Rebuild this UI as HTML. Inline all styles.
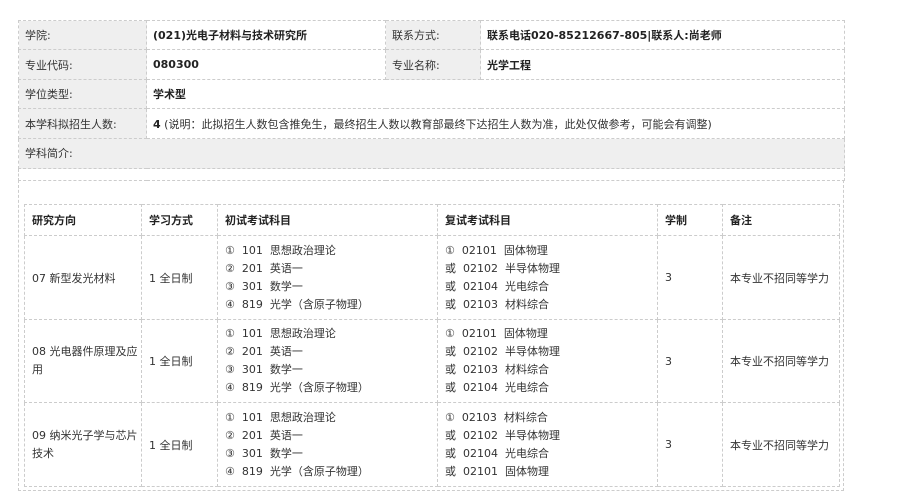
<!DOCTYPE html>
<html><head><meta charset="utf-8"><style>
body{margin:0;background:#fff;font-family:"DejaVu Sans","Noto Sans CJK SC",sans-serif;font-size:11px;color:#333;}
table{border-collapse:collapse;table-layout:fixed;position:absolute;}
td{border:1px dashed #ccc;padding:0 0 0 6px;vertical-align:middle;}
#o{left:18px;top:20px;width:826px;}
#o td.l{background:#efefef;}
#o td b{color:#222;}
#i{left:24px;top:204px;width:815px;}
#i td{padding-left:7px;}
#i th{border:1px dashed #ccc;text-align:left;padding-left:7px;font-weight:bold;color:#222;height:28px;}
.ln{line-height:18px;}
#box{position:absolute;left:18px;top:180px;width:824px;height:310px;border:1px dashed #ccc;border-top:none;}
</style></head><body>
<div id="box"></div>
<table id="o">
<colgroup><col style="width:128px"><col style="width:239px"><col style="width:95px"><col style="width:364px"></colgroup>
<tr style="height:29px"><td class="l">学院:</td><td><b>(021)光电子材料与技术研究所</b></td><td class="l">联系方式:</td><td><b>联系电话020-85212667-805|联系人:尚老师</b></td></tr>
<tr style="height:30px"><td class="l">专业代码:</td><td><b>080300</b></td><td class="l">专业名称:</td><td><b>光学工程</b></td></tr>
<tr style="height:29px"><td class="l">学位类型:</td><td colspan="3"><b>学术型</b></td></tr>
<tr style="height:30px"><td class="l">本学科拟招生人数:</td><td colspan="3"><b>4</b> (说明：此拟招生人数包含推免生，最终招生人数以教育部最终下达招生人数为准，此处仅做参考，可能会有调整)</td></tr>
<tr style="height:30px"><td class="l" colspan="4" style="padding-bottom:2px">学科简介:</td></tr>
<tr style="height:12px"><td colspan="4"></td></tr>
</table>
<table id="i">
<colgroup><col style="width:117px"><col style="width:76px"><col style="width:220px"><col style="width:220px"><col style="width:65px"><col style="width:117px"></colgroup>
<tr><th>研究方向</th><th>学习方式</th><th>初试考试科目</th><th>复试考试科目</th><th>学制</th><th>备注</th></tr>
<tr style="height:84px"><td>07 新型发光材料</td><td>1 全日制</td><td class="ln">①&nbsp; 101&nbsp; 思想政治理论<br>②&nbsp; 201&nbsp; 英语一<br>③&nbsp; 301&nbsp; 数学一<br>④&nbsp; 819&nbsp; 光学（含原子物理）</td><td class="ln">①&nbsp; 02101&nbsp; 固体物理<br>或&nbsp; 02102&nbsp; 半导体物理<br>或&nbsp; 02104&nbsp; 光电综合<br>或&nbsp; 02103&nbsp; 材料综合</td><td>3</td><td>本专业不招同等学力</td></tr>
<tr style="height:83px"><td class="ln">08 光电器件原理及应用</td><td>1 全日制</td><td class="ln">①&nbsp; 101&nbsp; 思想政治理论<br>②&nbsp; 201&nbsp; 英语一<br>③&nbsp; 301&nbsp; 数学一<br>④&nbsp; 819&nbsp; 光学（含原子物理）</td><td class="ln">①&nbsp; 02101&nbsp; 固体物理<br>或&nbsp; 02102&nbsp; 半导体物理<br>或&nbsp; 02103&nbsp; 材料综合<br>或&nbsp; 02104&nbsp; 光电综合</td><td>3</td><td>本专业不招同等学力</td></tr>
<tr style="height:84px"><td class="ln">09 纳米光子学与芯片技术</td><td>1 全日制</td><td class="ln">①&nbsp; 101&nbsp; 思想政治理论<br>②&nbsp; 201&nbsp; 英语一<br>③&nbsp; 301&nbsp; 数学一<br>④&nbsp; 819&nbsp; 光学（含原子物理）</td><td class="ln">①&nbsp; 02103&nbsp; 材料综合<br>或&nbsp; 02102&nbsp; 半导体物理<br>或&nbsp; 02104&nbsp; 光电综合<br>或&nbsp; 02101&nbsp; 固体物理</td><td>3</td><td>本专业不招同等学力</td></tr>
</table>
</body></html>
